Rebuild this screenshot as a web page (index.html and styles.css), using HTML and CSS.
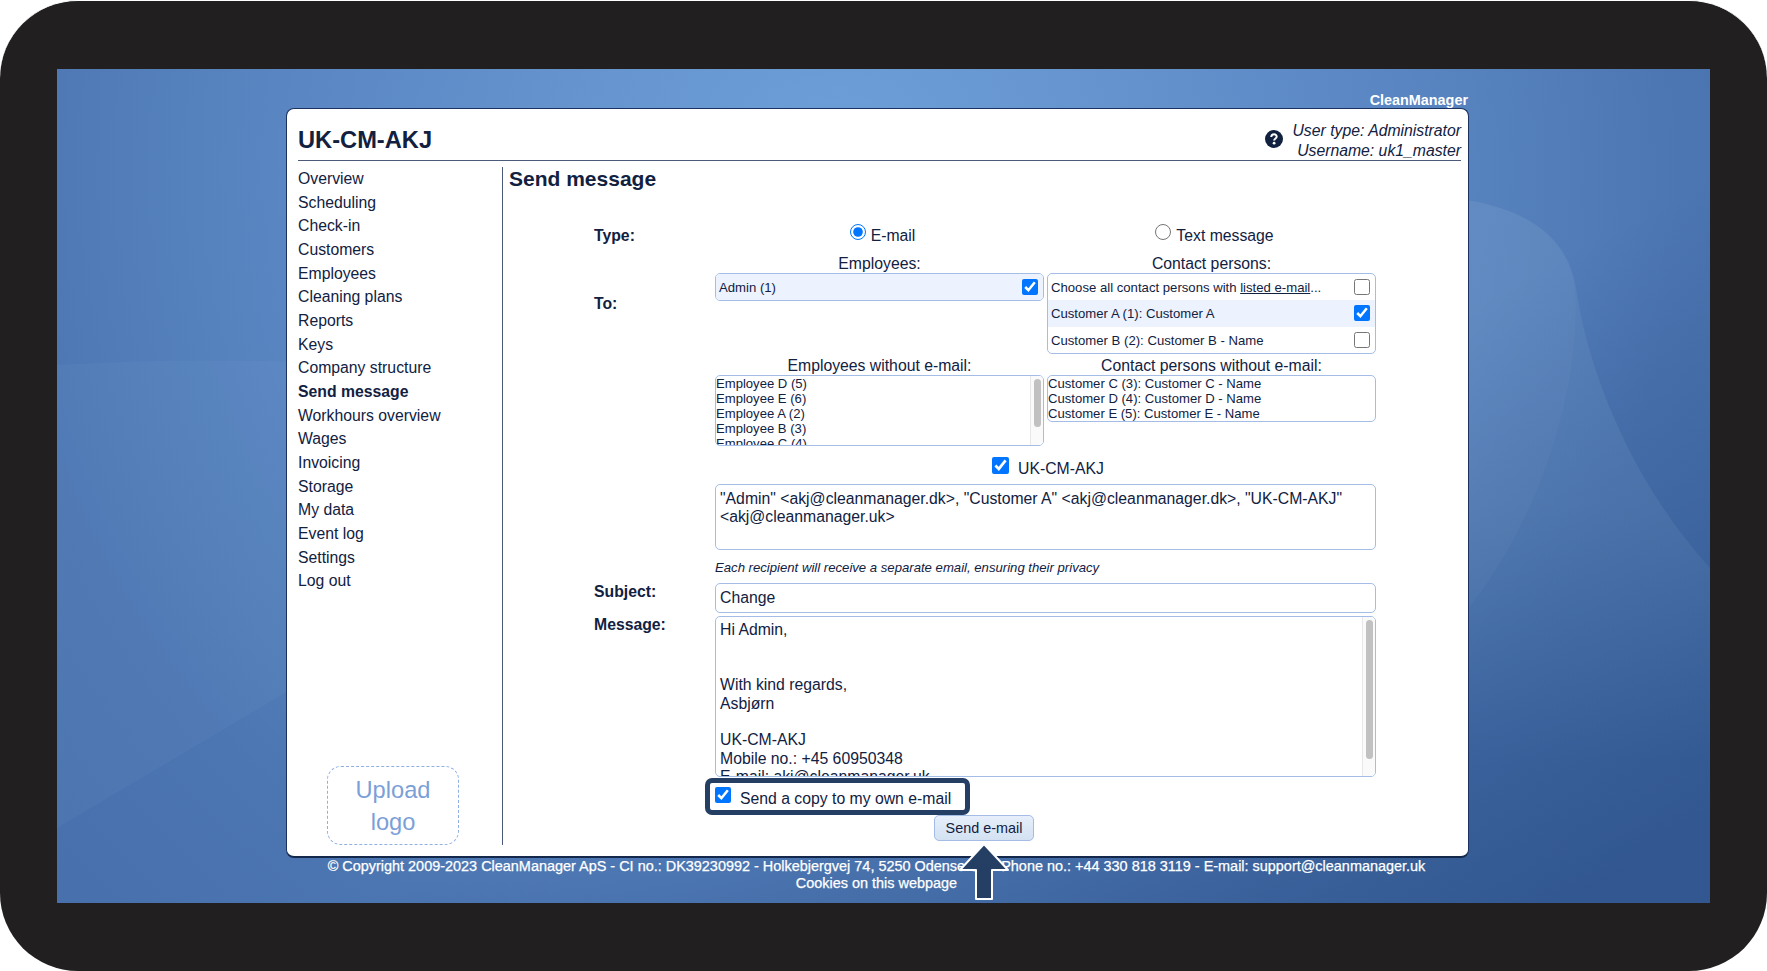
FILE: index.html
```html
<!DOCTYPE html>
<html lang="en">
<head>
    <meta charset="UTF-8">
    <meta name="viewport" content="width=device-width, initial-scale=1.0">
    <title>CleanManager - Send message</title>

    <link rel="stylesheet" href="styles.css">
</head>
<body>

    <div class="device">
        <div class="screen">

            <svg class="wallpaper" viewBox="57 69 1653 834" preserveAspectRatio="none">
                <defs>
                    <radialGradient id="glow" gradientUnits="userSpaceOnUse" cx="840" cy="170" r="1050">
                        <stop offset="0" stop-color="#6fa0d9"></stop>
                        <stop offset="0.5" stop-color="#5b88c4"></stop>
                        <stop offset="0.8" stop-color="#4c76b2"></stop>
                        <stop offset="1" stop-color="#4770ad"></stop>
                    </radialGradient>
                    <linearGradient id="shade" gradientUnits="userSpaceOnUse" x1="1150" y1="480" x2="1420" y2="980">
                        <stop offset="0" stop-color="#2b4f87" stop-opacity="0"></stop>
                        <stop offset="1" stop-color="#2b4f87" stop-opacity="0.75"></stop>
                    </linearGradient>
                    <linearGradient id="wave" x1="0" y1="0" x2="0" y2="1">
                        <stop offset="0" stop-color="#9db9d9" stop-opacity="0.12"></stop>
                        <stop offset="0.55" stop-color="#8fb2d4" stop-opacity="0.13"></stop>
                        <stop offset="1" stop-color="#8fb2d4" stop-opacity="0"></stop>
                    </linearGradient>
                </defs>
                <rect x="57" y="69" width="1653" height="834" fill="url(#glow)"></rect>
                <rect x="57" y="69" width="1653" height="834" fill="url(#shade)"></rect>
                <path d="M1400 196 C1500 194 1566 222 1576 288 C1588 370 1630 480 1710 568 L1710 760 L1400 760 Z" fill="url(#wave)"></path>
                <path d="M1400 196 C1500 194 1566 222 1575 288 C1582 400 1530 550 1440 640 L1400 660 Z" fill="#9cc0e0" fill-opacity="0.06"></path>
                <path d="M57 365 Q180 358 300 362 L300 684 L57 828 Z" fill="#8db0dc" fill-opacity="0.08"></path>
            </svg>

            <div class="brand">CleanManager</div>

            <div class="panel">
                <div class="header">
                    <h1>UK-CM-AKJ</h1>
                    <div class="user">
                        <svg class="help" viewBox="0 0 18 18">
                            <circle cx="9" cy="9" r="9" fill="#11213f"></circle>
                            <path d="M6.2 7 C6.4 3.4 11.9 3.6 11.7 6.7 C11.6 8.5 9.1 8.5 9.1 10.6" fill="none" stroke="#fff" stroke-width="2"></path>
                            <circle cx="9.1" cy="13.2" r="1.4" fill="#fff"></circle>
                        </svg>
                        <div class="user_info">User type: Administrator<br>Username: uk1_master</div>
                    </div>
                </div>

                <div class="content">
                    <div class="sidebar">
                        <ul class="menu">
                            <li>Overview</li>
                            <li>Scheduling</li>
                            <li>Check-in</li>
                            <li>Customers</li>
                            <li>Employees</li>
                            <li>Cleaning plans</li>
                            <li>Reports</li>
                            <li>Keys</li>
                            <li>Company structure</li>
                            <li class="active">Send message</li>
                            <li>Workhours overview</li>
                            <li>Wages</li>
                            <li>Invoicing</li>
                            <li>Storage</li>
                            <li>My data</li>
                            <li>Event log</li>
                            <li>Settings</li>
                            <li>Log out</li>
                        </ul>
                        <div class="logo">Upload<br>logo</div>
                    </div>

                    <div class="main">
                        <h2>Send message</h2>

                        <form class="form">
                            <div class="row type_row">
                                <div class="label">Type:</div>
                                <div class="pair">
                                    <label class="radio"><input type="radio" name="type" checked>E-mail</label>
                                    <label class="radio"><input type="radio" name="type">Text message</label>
                                </div>
                            </div>

                            <div class="row">
                                <div class="label label_to">To:</div>
                                <div class="field">
                                    <div class="pair">
                                        <div>
                                            <div class="caption">Employees:</div>
                                            <div class="picker">
                                                <label class="pick on">Admin (1)<input type="checkbox" checked></label>
                                            </div>
                                        </div>
                                        <div>
                                            <div class="caption">Contact persons:</div>
                                            <div class="picker">
                                                <label class="pick"><span>Choose all contact persons with <u>listed e-mail</u>...</span><input type="checkbox"></label>
                                                <label class="pick on">Customer A (1): Customer A<input type="checkbox" checked></label>
                                                <label class="pick">Customer B (2): Customer B - Name<input type="checkbox"></label>
                                            </div>
                                        </div>
                                    </div>

                                    <div class="pair without">
                                        <div>
                                            <div class="caption">Employees without e-mail:</div>
                                            <div class="list list_tall">
                                                Employee D (5)<br>
                                                Employee E (6)<br>
                                                Employee A (2)<br>
                                                Employee B (3)<br>
                                                Employee C (4)
                                                <div class="scroll"><div class="thumb thumb_list"></div></div>
                                            </div>
                                        </div>
                                        <div>
                                            <div class="caption">Contact persons without e-mail:</div>
                                            <div class="list">
                                                Customer C (3): Customer C - Name<br>
                                                Customer D (4): Customer D - Name<br>
                                                Customer E (5): Customer E - Name
                                            </div>
                                        </div>
                                    </div>

                                    <label class="company"><input type="checkbox" checked>UK-CM-AKJ</label>

                                    <div class="box recipients">"Admin" &lt;akj@cleanmanager.dk&gt;, "Customer A" &lt;akj@cleanmanager.dk&gt;, "UK-CM-AKJ"<br>&lt;akj@cleanmanager.uk&gt;</div>
                                    <div class="note">Each recipient will receive a separate email, ensuring their privacy</div>
                                </div>
                            </div>

                            <div class="row subject_row">
                                <div class="label">Subject:</div>
                                <div class="box subject">Change</div>
                            </div>

                            <div class="row message_row">
                                <div class="label">Message:</div>
                                <div class="box message">Hi Admin,<br><br><br>With kind regards,<br>Asbjørn<br><br>UK-CM-AKJ<br>Mobile no.: +45 60950348<br>E-mail: akj@cleanmanager.uk
                                    <div class="scroll"><div class="thumb thumb_message"></div></div>
                                </div>
                            </div>

                            <label class="copy"><input type="checkbox" checked>Send a copy to my own e-mail</label>

                            <button type="button" class="send">Send e-mail</button>
                        </form>
                    </div>
                </div>
            </div>

            <div class="footer">
                © Copyright 2009-2023 CleanManager ApS - CI no.: DK39230992 - Holkebjergvej 74, 5250 Odense SV - Phone no.: +44 330 818 3119 - E-mail: support@cleanmanager.uk<br>
                Cookies on this webpage
            </div>

            <svg class="arrow" viewBox="0 0 52 60">
                <path d="M26 2 L50 28 H34 V57 H18 V28 H2 Z" fill="#243f63" stroke="#fff" stroke-width="2" stroke-linejoin="round"></path>
            </svg>

        </div>
    </div>

</body>
</html>
```
FILE: styles.css
```css
*{
    box-sizing: border-box;
}

body{
    margin: 0;
    background: #fff;
    font-family: "Liberation Sans", Arial, sans-serif;
    font-size: 15.78px;
    line-height: 20px;
    color: #11213f;
}

.device{
    width: 1767px;
    height: 971px;
    padding: 68px 57px;
    background: #221f20;
    border-top: 1px solid #fff;
    border-radius: 78px;
}

.screen{
    position: relative;
    height: 834px;
    padding: 18px 241px 0 229px;
    overflow: hidden;
    background: #4b75b1;
}

.wallpaper{
    position: absolute;
    left: 0;
    top: 0;
    width: 100%;
    height: 100%;
}

.brand{
    position: relative;
    height: 21px;
    padding-right: 1px;
    line-height: 26px;
    font-size: 14.4px;
    font-weight: bold;
    text-align: right;
    color: #fff;
}

.panel{
    position: relative;
    height: 750px;
    padding: 0 7px 0 11px;
    background: #fff;
    border: 1px solid #1b3260;
    border-bottom: 2px solid #14284c;
    border-radius: 8px;
}

.header{
    display: flex;
    justify-content: space-between;
    height: 52px;
    border-bottom: 1px solid #4b5a78;
}

.header h1{
    margin: 16px 0 0;
    font-size: 23.67px;
    line-height: 30px;
}

.user{
    display: flex;
    gap: 9px;
    text-align: right;
    font-style: italic;
}

.user_info{
    margin-top: 12px;
}

.help{
    width: 18px;
    height: 18px;
    margin-top: 21px;
}

.content{
    display: flex;
}

.sidebar{
    display: flex;
    flex-direction: column;
    justify-content: space-between;
    width: 205px;
    height: 678px;
    margin-top: 6px;
    border-right: 1px solid #4b5a78;
}

.menu{
    margin: 0;
    padding: 0;
    list-style: none;
    line-height: 23.67px;
}

.menu .active{
    font-weight: bold;
}

.logo{
    width: 132px;
    height: 79px;
    margin-left: 29px;
    padding-top: 8px;
    border: 1px dashed #8fb0e2;
    border-radius: 14px;
    font-size: 23.67px;
    line-height: 31.6px;
    text-align: center;
    color: #7c9fd8;
}

.main{
    margin-left: 6px;
}

.main h2{
    margin: 6px 0 0;
    font-size: 21px;
    line-height: 24px;
}

.form{
    display: flex;
    flex-direction: column;
    width: 782px;
    margin: 35px 0 0 85px;
}

.form input{
    width: 16px;
    height: 16px;
    margin: 0;
    accent-color: #0075ff;
}

.row{
    display: flex;
}

.label{
    width: 121px;
    font-weight: bold;
}

.label_to{
    padding-top: 40px;
}

.pair{
    display: grid;
    grid-template-columns: 329px 329px;
    column-gap: 3px;
    align-items: start;
}

.type_row{
    height: 28px;
}

.radio{
    display: flex;
    justify-content: center;
    gap: 5px;
    padding-left: 6px;
}

.radio input{
    margin-top: -2px;
}

.caption{
    height: 19px;
    text-align: center;
}

.without{
    margin-top: 2px;
}

.picker,
.list,
.box{
    position: relative;
    overflow: hidden;
    background: #fff;
    border: 1px solid #a3bde6;
    border-radius: 5px;
}

.pick{
    display: flex;
    justify-content: space-between;
    height: 26.33px;
    padding: 0 5px 0 3px;
    font-size: 13.15px;
    line-height: 28px;
}

.pick input{
    margin-top: 5px;
}

.pick.on{
    background: #ecf2fe;
}

.list{
    height: 47px;
    font-size: 13.1px;
    line-height: 15px;
}

.list_tall{
    height: 71px;
}

.scroll{
    position: absolute;
    top: 0;
    right: 0;
    bottom: 0;
    width: 13px;
    background: #fafafa;
    border-left: 1px solid #e8e8e8;
}

.thumb{
    width: 7px;
    margin: 3px 0 0 3px;
    background: #c1c1c1;
    border-radius: 4px;
}

.thumb_list{
    height: 48px;
}

.thumb_message{
    height: 139px;
}

.company{
    display: flex;
    justify-content: center;
    gap: 9px;
    height: 38px;
    padding: 13px 0 0 5px;
}

.form .company input{
    width: 17px;
    height: 17px;
    margin-top: -2px;
}

.box{
    width: 661px;
    padding: 4px;
    line-height: 18.4px;
}

.recipients{
    height: 66px;
    padding-top: 5px;
}

.note{
    height: 33px;
    padding-top: 8px;
    font-size: 13.15px;
    font-style: italic;
}

.subject_row{
    height: 33px;
}

.subject{
    height: 30px;
    padding-top: 5px;
}

.message_row .label,
.subject_row .label{
    margin-top: -1px;
}

.message{
    height: 161px;
}

.copy{
    display: flex;
    gap: 9px;
    align-self: flex-start;
    width: 265px;
    height: 37px;
    margin: 1px 0 0 111px;
    padding: 6px 0 0 5px;
    border: 5px solid #243f63;
    border-radius: 7px;
}

.copy input{
    margin-top: -2px;
}

.send{
    align-self: center;
    width: 100px;
    height: 26px;
    margin-right: 2px;
    padding: 0;
    background: linear-gradient(#e6effa, #d3e1f2);
    border: 1px solid #a3bde6;
    border-radius: 5px;
    font-family: inherit;
    font-size: 14.4px;
    color: #11213f;
}

.footer{
    position: relative;
    margin: 0 -39px 0 -41px;
    font-size: 14.45px;
    line-height: 16.7px;
    text-align: center;
    white-space: nowrap;
    color: #fff;
    -webkit-text-stroke: 0.25px #fff;
}

.arrow{
    position: absolute;
    left: 901px;
    top: 773px;
    width: 52px;
    height: 60px;
}
```
